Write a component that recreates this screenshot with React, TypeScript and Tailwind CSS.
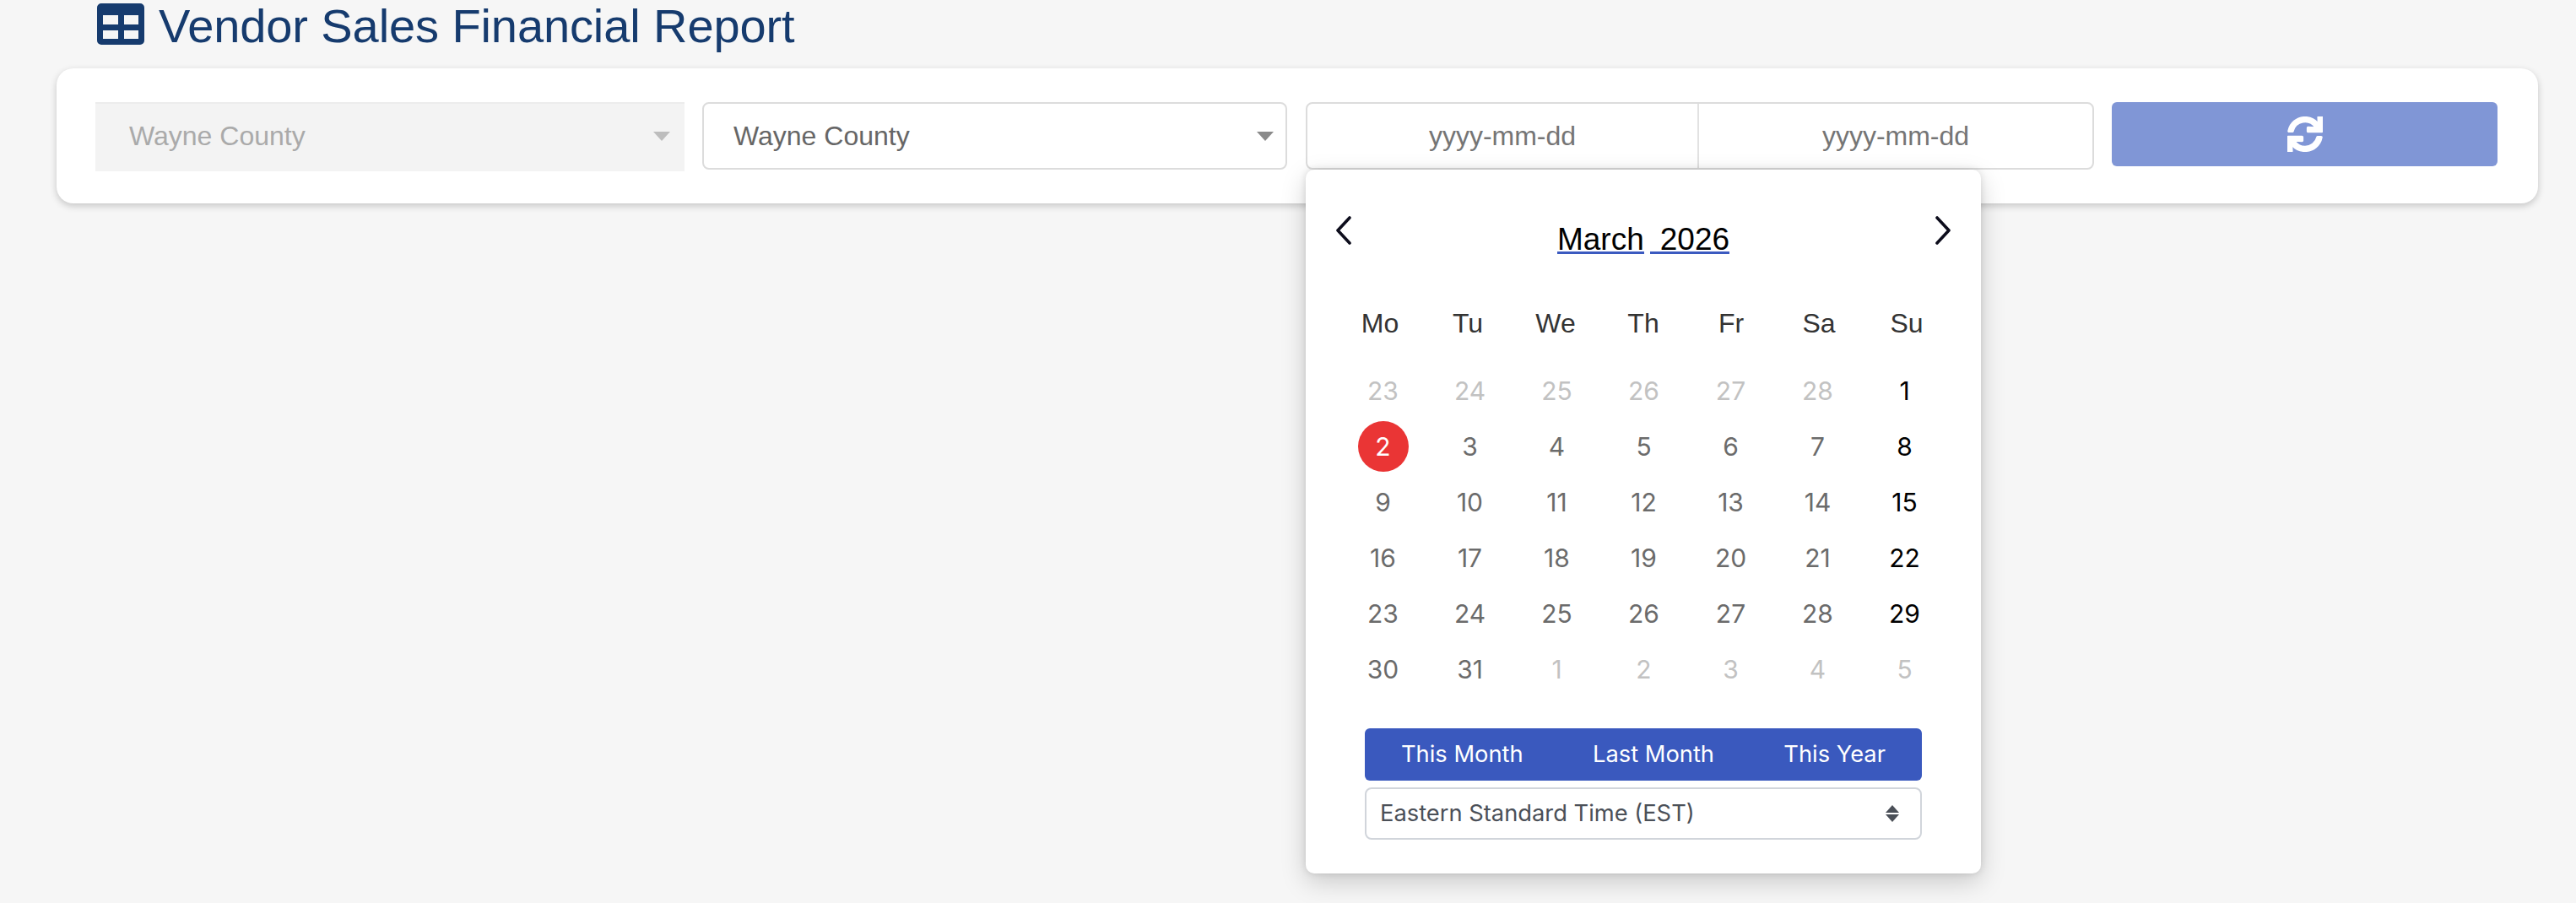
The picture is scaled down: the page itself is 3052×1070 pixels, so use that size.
// Vendor sales report filter bar with open date picker
import { FaSync } from 'react-icons/fa';

const sans = "font-['Liberation_Sans',Arial,sans-serif]";
const inter = "font-['Inter',sans-serif]";

const weekDays = ['Mo', 'Tu', 'We', 'Th', 'Fr', 'Sa', 'Su'];

// [label, kind] kind: o = other month, n = normal, s = sunday, t = today
const days: [number, string][] = [
  [23, 'o'], [24, 'o'], [25, 'o'], [26, 'o'], [27, 'o'], [28, 'o'], [1, 's'],
  [2, 't'], [3, 'n'], [4, 'n'], [5, 'n'], [6, 'n'], [7, 'n'], [8, 's'],
  [9, 'n'], [10, 'n'], [11, 'n'], [12, 'n'], [13, 'n'], [14, 'n'], [15, 's'],
  [16, 'n'], [17, 'n'], [18, 'n'], [19, 'n'], [20, 'n'], [21, 'n'], [22, 's'],
  [23, 'n'], [24, 'n'], [25, 'n'], [26, 'n'], [27, 'n'], [28, 'n'], [29, 's'],
  [30, 'n'], [31, 'n'], [1, 'o'], [2, 'o'], [3, 'o'], [4, 'o'], [5, 'o'],
];

function Caret({ color }: { color: string }) {
  return <span className={`w-0 h-0 border-x-[10px] border-x-transparent border-t-[11px] ${color}`} />;
}

function TableIcon() {
  return (
    <svg width="56" height="49" viewBox="0 0 56 49" className="shrink-0">
      <path
        fillRule="evenodd"
        fill="#163b6e"
        d="M5 0H51A5 5 0 0 1 56 5V44A5 5 0 0 1 51 49H5A5 5 0 0 1 0 44V5A5 5 0 0 1 5 0ZM7 14V25H25V14ZM32 14V25H49V14ZM7 32V42H25V32ZM32 32V42H49V32Z"
      />
    </svg>
  );
}

function Chevron({ right }: { right?: boolean }) {
  return (
    <svg width="20" height="34" viewBox="0 0 20 34" fill="none" stroke="#0d0d1c" strokeWidth="3.6" strokeLinecap="round" strokeLinejoin="round">
      <path d={right ? 'M3 2L17 17L3 32' : 'M17 2L3 17L17 32'} />
    </svg>
  );
}

function DatePicker() {
  return (
    <div className={`absolute left-[-2px] top-[78px] w-[800px] bg-white rounded-[10px] pt-[49px] pb-[40px] shadow-[0_10px_30px_rgba(0,0,0,0.18),0_0_8px_rgba(0,0,0,0.12)] ${sans}`}>
      <div className="h-[60px] flex justify-between items-start px-[35px]">
        <div className="mt-[6px]"><Chevron /></div>
        <div className="mt-[13px] flex gap-[7px] text-[37px] leading-[41px] text-black">
          <span className="border-b-[3px] border-[#3b5ac0] h-[38px]">March</span>
          <span className="border-b-[3px] border-[#3b5ac0] h-[38px] pl-[12px]">2026</span>
        </div>
        <div className="mt-[6px]"><Chevron right /></div>
      </div>

      <div className="mt-[48px] h-[50px] ml-[36px] w-[728px] grid grid-cols-7 items-center text-center text-[32px] text-[#333]">
        {weekDays.map(d => <div key={d}>{d}</div>)}
      </div>

      <div className={`mt-[22px] ml-[40px] w-[721px] grid grid-cols-7 auto-rows-[66px] text-[30px] ${inter}`}>
        {days.map(([n, kind], i) => (
          <div key={i} className="flex items-center justify-center">
            {kind === 't' ? (
              <span className="w-[60px] h-[60px] rounded-full bg-[#ea3535] text-white flex items-center justify-center">{n}</span>
            ) : (
              <span className={kind === 'o' ? 'text-[#c2c2c2]' : kind === 's' ? 'text-black' : 'text-[#6b6b6b]'}>{n}</span>
            )}
          </div>
        ))}
      </div>

      <div className={`mt-[37px] mx-[70px] h-[62px] rounded-[6px] bg-[#3a59be] text-white text-[27.3px] px-[43px] flex items-center justify-between ${inter}`}>
        <span>This Month</span>
        <span>Last Month</span>
        <span>This Year</span>
      </div>
      <div className={`mt-[8px] mx-[70px] h-[62px] rounded-[8px] border-2 border-[#d1d5db] bg-white pl-[16px] pr-[24px] flex items-center justify-between text-[27.3px] text-[#4b5058] ${inter}`}>
        <span>Eastern Standard Time (EST)</span>
        <svg width="18" height="20" viewBox="0 0 18 20" fill="#4b5058">
          <path d="M9 0L17 9H1Z" />
          <path d="M1 11H17L9 20Z" />
        </svg>
      </div>
    </div>
  );
}

export default function App() {
  return (
    <div className={`w-[3052px] h-[1070px] bg-[#f6f6f6] overflow-hidden ${sans}`}>
      <div className="h-[81px] pl-[115px] pt-[4px] flex items-start gap-[17px]">
        <TableIcon />
        <h1 className="text-[56px] leading-[54px] tracking-[-0.1px] text-[#163b6e]">Vendor Sales Financial Report</h1>
      </div>

      <div className="ml-[67px] w-[2940px] h-[160px] bg-white rounded-[20px] shadow-[0_3px_8px_rgba(0,0,0,0.2)] pl-[46px] pr-[48px] pt-[40px] flex items-start text-[32px]">
        <div className="shrink-0 w-[698px] h-[82px] bg-[#f3f3f3] border-t-2 border-[#ececec] pl-[40px] pr-[17px] pb-[4px] flex items-center justify-between text-[#aaaaaa]">
          <span>Wayne County</span>
          <Caret color="border-t-[#bdbdbd]" />
        </div>
        <div className="shrink-0 ml-[21px] w-[693px] h-[80px] bg-white rounded-[8px] border-2 border-[#dcdcdc] pl-[35px] pr-[14px] flex items-center justify-between text-[#666666]">
          <span>Wayne County</span>
          <Caret color="border-t-[#8a8a8a]" />
        </div>
        <div className="shrink-0 relative ml-[22px] w-[934px] h-[80px] bg-white rounded-[8px] border-2 border-[#dcdcdc] flex text-[#757575]">
          <div className="w-[464px] flex items-center justify-center border-r-2 border-[#e2e2e2]">yyyy-mm-dd</div>
          <div className="flex-1 flex items-center justify-center">yyyy-mm-dd</div>
          <DatePicker />
        </div>
        <div className="shrink-0 ml-[21px] w-[457px] h-[76px] bg-[#8096d6] rounded-[6px] flex items-center justify-center text-white">
          <FaSync size={42} stroke="currentColor" strokeWidth={18} />
        </div>
      </div>
    </div>
  );
}
